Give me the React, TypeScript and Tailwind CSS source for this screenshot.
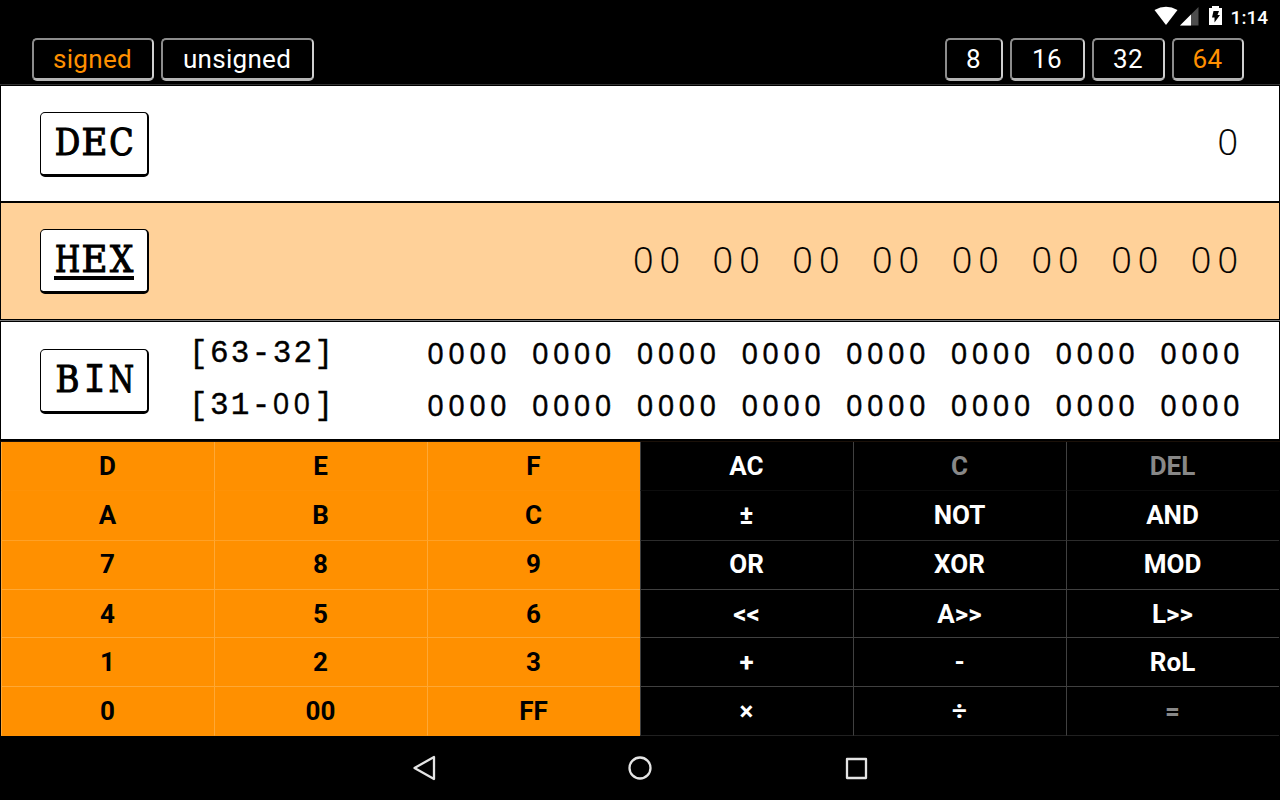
import React from "react";

const monoGlyph: Record<string, string> = {
  D: "scaleX(0.86)",
  E: "scaleX(0.96)",
  C: "scaleX(0.86)",
  H: "scaleX(0.78)",
  X: "scaleX(0.88)",
  B: "scaleX(0.88)",
  I: "translateY(1px) scaleX(0.88)",
  N: "scaleX(0.78)",
};

function Toggle({ label, width, active }: { label: string; width: string; active?: boolean }) {
  return (
    <button
      className={`h-[43px] ${width} shrink-0 rounded-[5px] border-t-2 border-r-2 border-b-[3px] border-l-2 border-t-[#8c8c8c] border-l-[#8c8c8c] border-r-[#cfcfcf] border-b-[#b4b4b4] text-[26px] leading-[38px] tracking-[0.3px] ${active ? "text-[#ff9000]" : "text-white"}`}
    >
      <span className="-ml-px">{label}</span>
    </button>
  );
}

function Mode({ name, active }: { name: string; active?: boolean }) {
  return (
    <button className="mt-px flex h-[65px] w-[109px] shrink-0 flex-col items-center rounded-[5px] border-t border-r-2 border-b-[3px] border-l border-black bg-white pt-[9px]">
      <span className={`flex h-[41px] w-[80px] justify-center ${active ? "border-b-4 border-black" : ""}`}>
        {name.split("").map((c) => (
          <span
            key={c}
            className={`flex w-[27px] shrink-0 justify-center leading-[42px] ${c === "I" ? "font-['Liberation_Mono',monospace] text-[42px] [-webkit-text-stroke:0.6px_black]" : "font-['DejaVu_Serif',serif] text-[37px] [-webkit-text-stroke:1.2px_black]"}`}
            style={{ transform: monoGlyph[c] }}
          >
            {c}
          </span>
        ))}
      </span>
    </button>
  );
}

const bits = "0000 0000 0000 0000 0000 0000 0000 0000";

function BinRow({ a, b }: { a: string; b: string }) {
  return (
    <div className="flex h-[52px] items-center justify-between">
      <span className="pt-[3px] font-['Liberation_Mono',monospace] text-[31px] tracking-[2.3px] whitespace-pre [-webkit-text-stroke:0.4px_black]">
        {a}
        {b === "00" ? <span className="font-['Open_Sans',sans-serif] text-[29px] leading-none tracking-[4.3px]">00</span> : b}]
      </span>
      <span className="font-['Open_Sans',sans-serif] text-[29px] font-normal tracking-[4.36px] [word-spacing:9.05px] whitespace-pre [-webkit-text-stroke:0.5px_black]">
        {bits}
      </span>
    </div>
  );
}

const rows = [
  ["D", "E", "F", "AC", "C", "DEL"],
  ["A", "B", "C", "±", "NOT", "AND"],
  ["7", "8", "9", "OR", "XOR", "MOD"],
  ["4", "5", "6", "<<", "A>>", "L>>"],
  ["1", "2", "3", "+", "-", "RoL"],
  ["0", "00", "FF", "×", "÷", "="],
];
const heights = ["h-[49px]", "h-[50px]", "h-[49px]", "h-[48px]", "h-[49px]", "h-[49px]"];
const nudges = ["", "pb-[2px]", "pb-[2px]", "", "", ""];
const lightLines = ["border-b-[#ff9205]", "border-b-[#ffa126]", "border-b-[#ffa834]", "border-b-[#ffa834]", "border-b-[#ffa834]", "border-b-[#ff9205]"];
const darkLines = ["border-b-[#0d0d0d]", "border-b-[#2c2c2c]", "border-b-[#404040]", "border-b-[#404040]", "border-b-[#404040]", "border-b-[#202020]"];

export default function App() {
  return (
    <div className="flex h-[800px] w-[1280px] flex-col overflow-hidden bg-black font-['Roboto',sans-serif] text-black">
      <header className="flex h-[38px] shrink-0 items-start justify-end pr-3">
        <svg width="76" height="32" viewBox="0 0 76 32">
          <path d="M5.500 10Q17 3.500 28.500 10L17 25Z" fill="#fff" />
          <path d="M31 25.500L49.500 7V25.500Z" fill="#4d4d4d" />
          <path d="M31 25.500L42 14.500V25.500Z" fill="#fff" />
          <path d="M60 8H63V6H70V8H73V25H60Z" fill="#fff" />
          <path d="M64.500 11H70L68.500 15H71L65.500 22.500V17.500H63Z" fill="#000" />
        </svg>
        <span className="pl-[6px] text-[19px] leading-[35px] font-medium text-white">1:14</span>
      </header>
      <div className="flex h-[46px] shrink-0 items-start gap-[7px] pr-[36px] pl-8">
        <Toggle label="signed" width="w-[122px]" active />
        <Toggle label="unsigned" width="w-[153px]" />
        <span className="flex-1" />
        <Toggle label="8" width="w-[58px]" />
        <Toggle label="16" width="w-[75px]" />
        <Toggle label="32" width="w-[73px]" />
        <Toggle label="64" width="w-[72px]" active />
      </div>
      <div className="h-px shrink-0 bg-[#333]" />
      <section className="flex h-[117px] shrink-0 items-start justify-between border-x border-y border-black bg-white pt-[25px] pr-[41px] pl-[39px]">
        <Mode name="DEC" />
        <span className="font-['Open_Sans',sans-serif] text-[36px] leading-[62px] font-light [-webkit-text-stroke:0.2px_black]">0</span>
      </section>
      <section className="flex h-[118px] shrink-0 items-start justify-between border-x border-y border-black bg-[#ffd199] pt-[25px] pr-[35px] pl-[39px]">
        <Mode name="HEX" active />
        <span className="font-['Open_Sans',sans-serif] text-[36px] leading-[64px] font-light tracking-[6.02px] [word-spacing:11.200px] [-webkit-text-stroke:0.2px_black]">
          00 00 00 00 00 00 00 00
        </span>
      </section>
      <div className="h-px shrink-0 bg-[#777]" />
      <section className="flex h-[120px] shrink-0 border-x border-t border-b-2 border-black bg-white pr-[35px] pl-[39px]">
        <div className="pt-[26px]">
          <Mode name="BIN" />
        </div>
        <div className="flex-1 pt-[5px] pl-[40px]">
          <BinRow a="[63-" b="32" />
          <BinRow a="[31-" b="00" />
        </div>
      </section>
      <main className="flex h-[295px] shrink-0 flex-col border-t border-l border-t-[#1a1008] border-l-black">
        {rows.map((row, r) => (
          <div key={r} className={`flex ${heights[r]} shrink-0`}>
            {row.map((t, c) => (
              <div
                key={c}
                className={`flex w-[213px] shrink-0 items-center justify-center border-b border-l pr-px text-[26px] leading-none font-bold ${nudges[r]} ${
                  c < 3 ? `border-l-[#ffa834] bg-[#ff9000] ${lightLines[r]}` : `border-l-[#404040] ${darkLines[r]}`
                } ${c >= 3 && (t === "C" || t === "DEL" || t === "=") ? "text-[#888]" : c >= 3 ? "text-white" : ""}`}
              >
                {t}
              </div>
            ))}
          </div>
        ))}
      </main>
      <nav className="flex h-[64px] shrink-0 justify-center">
        <svg width="460" height="64" viewBox="410 736 460 64" fill="none" stroke="#e4e4e4" strokeWidth="2.300" strokeLinejoin="round">
          <path d="M414.500 768L434 757V779Z" />
          <circle cx="640" cy="768" r="10.500" />
          <rect x="847" y="759" width="19" height="19" />
        </svg>
      </nav>
    </div>
  );
}
